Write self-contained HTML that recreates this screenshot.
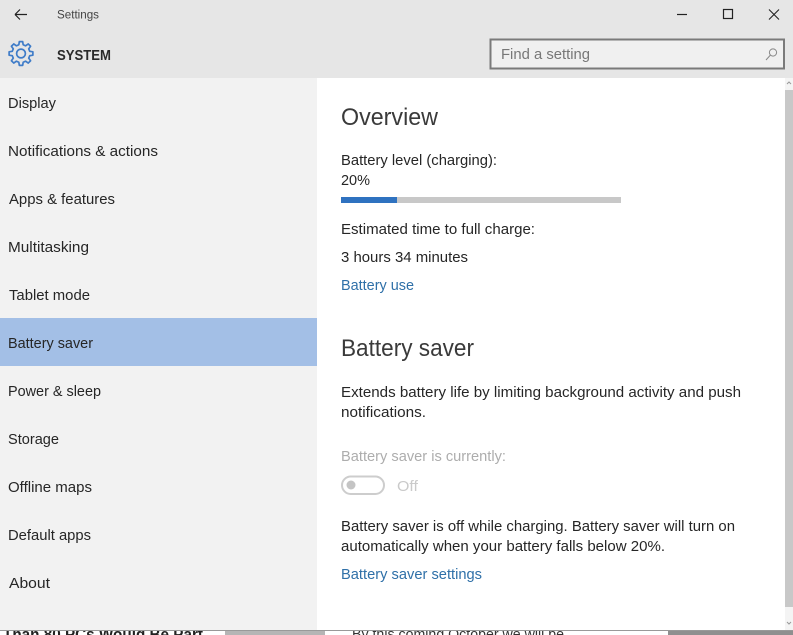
<!DOCTYPE html>
<html><head><meta charset="utf-8"><style>
html,body{margin:0;padding:0;background:#fff}
svg{display:block}
text{font-family:"Liberation Sans",sans-serif;font-size:14.5px;fill:#262626}
.l{fill:#2f70a8}.d{fill:#adadad}
</style></head><body>
<svg width="793" height="635" viewBox="0 0 793 635" xmlns="http://www.w3.org/2000/svg">
<rect width="793" height="635" fill="#fff"/>
<!-- window below -->
<rect y="630" width="793" height="5" fill="#fff"/>
<rect x="225" y="630" width="100" height="5" fill="#b5b5b5"/>
<rect x="668" y="630" width="125" height="5" fill="#8f8f8f"/>
<text x="3" y="640" style="font-size:17px;font-weight:bold;fill:#222" textLength="200" lengthAdjust="spacingAndGlyphs">Than 80 PCs Would Be Part</text>
<text x="352" y="639" style="fill:#333" textLength="212" lengthAdjust="spacingAndGlyphs">By this coming October we will be</text>
<!-- settings window -->
<rect width="793" height="630" fill="#fff"/>
<rect y="630" width="793" height="1" fill="#999"/>
<rect width="793" height="78" fill="#e6e6e6"/>
<rect y="78" width="317" height="552" fill="#f2f2f2"/>
<rect y="318" width="317" height="48" fill="#a3bfe6"/>
<!-- title bar -->
<path d="M15 14.5H27M15 14.5L20 9.5M15 14.5L20 19.5" fill="none" stroke="#222" stroke-width="1.2"/>
<text x="57" y="18.5" style="font-size:11.5px;fill:#444" textLength="42" lengthAdjust="spacingAndGlyphs">Settings</text>
<path d="M677 14.5H687" stroke="#222" stroke-width="1.2"/>
<rect x="723.5" y="9.5" width="9" height="9" fill="none" stroke="#222" stroke-width="1.2"/>
<path d="M769 9.5L779 19.5M779 9.5L769 19.5" stroke="#222" stroke-width="1.1"/>
<!-- gear -->
<g transform="translate(21 53.5)" fill="none" stroke="#3f7cc8" stroke-width="1.7" stroke-linejoin="round">
<circle r="4.4"/>
<path d="M8.73-2.18L11.88-1.67L11.88 1.67L8.73 2.18L7.71 4.64L9.58 7.22L7.22 9.58L4.64 7.71L2.18 8.73L1.67 11.88L-1.67 11.88L-2.18 8.73L-4.64 7.71L-7.22 9.58L-9.58 7.22L-7.71 4.64L-8.73 2.18L-11.88 1.67L-11.88-1.67L-8.73-2.18L-7.71-4.64L-9.58-7.22L-7.22-9.58L-4.64-7.71L-2.18-8.73L-1.67-11.88L1.67-11.88L2.18-8.73L4.64-7.71L7.22-9.58L9.58-7.22L7.71-4.64Z"/>
</g>
<text x="57" y="60" style="font-size:15px;font-weight:bold;fill:#2a2a2a" textLength="54" lengthAdjust="spacingAndGlyphs">SYSTEM</text>
<!-- search -->
<rect x="490.5" y="39.5" width="293.5" height="29" fill="#f0f0f0" stroke="#7a7a7a" stroke-width="2"/>
<text x="501" y="59" style="fill:#777" textLength="89" lengthAdjust="spacingAndGlyphs">Find a setting</text>
<circle cx="773" cy="52.5" r="3.6" fill="none" stroke="#888"/>
<path d="M770.5 55L766 60" stroke="#888"/>
<!-- nav -->
<text x="8" y="108" textLength="48" lengthAdjust="spacingAndGlyphs">Display</text>
<text x="8" y="156" textLength="150" lengthAdjust="spacingAndGlyphs">Notifications &amp; actions</text>
<text x="9" y="204" textLength="106" lengthAdjust="spacingAndGlyphs">Apps &amp; features</text>
<text x="8" y="252" textLength="81" lengthAdjust="spacingAndGlyphs">Multitasking</text>
<text x="9" y="300" textLength="81" lengthAdjust="spacingAndGlyphs">Tablet mode</text>
<text x="8" y="348" textLength="85" lengthAdjust="spacingAndGlyphs">Battery saver</text>
<text x="8" y="396" textLength="93" lengthAdjust="spacingAndGlyphs">Power &amp; sleep</text>
<text x="8" y="444" textLength="51" lengthAdjust="spacingAndGlyphs">Storage</text>
<text x="8" y="492" textLength="84" lengthAdjust="spacingAndGlyphs">Offline maps</text>
<text x="8" y="540" textLength="83" lengthAdjust="spacingAndGlyphs">Default apps</text>
<text x="9" y="588" textLength="41" lengthAdjust="spacingAndGlyphs">About</text>
<!-- content -->
<text x="341" y="125" style="font-size:24px;fill:#3a3a3a" textLength="97" lengthAdjust="spacingAndGlyphs">Overview</text>
<text x="341" y="165" textLength="156" lengthAdjust="spacingAndGlyphs">Battery level (charging):</text>
<text x="341" y="185" textLength="29" lengthAdjust="spacingAndGlyphs">20%</text>
<rect x="341" y="197" width="280" height="6" fill="#c8c8c8"/>
<rect x="341" y="197" width="56" height="6" fill="#2f72c0"/>
<text x="341" y="234" textLength="194" lengthAdjust="spacingAndGlyphs">Estimated time to full charge:</text>
<text x="341" y="262" textLength="127" lengthAdjust="spacingAndGlyphs">3 hours 34 minutes</text>
<text x="341" y="290" class="l" textLength="73" lengthAdjust="spacingAndGlyphs">Battery use</text>
<text x="341" y="356" style="font-size:24px;fill:#3a3a3a" textLength="133" lengthAdjust="spacingAndGlyphs">Battery saver</text>
<text x="341" y="397" textLength="400" lengthAdjust="spacingAndGlyphs">Extends battery life by limiting background activity and push</text>
<text x="341" y="417" textLength="85" lengthAdjust="spacingAndGlyphs">notifications.</text>
<text x="341" y="461" class="d" textLength="165" lengthAdjust="spacingAndGlyphs">Battery saver is currently:</text>
<rect x="342" y="476.5" width="42" height="17.5" rx="8.75" fill="#fff" stroke="#cdcdcd" stroke-width="2"/>
<circle cx="351" cy="485" r="4.5" fill="#c4c4c4"/>
<text x="397" y="491" style="fill:#cacaca" textLength="21" lengthAdjust="spacingAndGlyphs">Off</text>
<text x="341" y="531" textLength="394" lengthAdjust="spacingAndGlyphs">Battery saver is off while charging. Battery saver will turn on</text>
<text x="341" y="551" textLength="324" lengthAdjust="spacingAndGlyphs">automatically when your battery falls below 20%.</text>
<text x="341" y="579" class="l" textLength="141" lengthAdjust="spacingAndGlyphs">Battery saver settings</text>
<!-- scrollbar -->
<rect x="785" y="78" width="8" height="552" fill="#f4f4f4"/>
<rect x="785" y="90" width="8" height="517" fill="#c8c8c8"/>
<path d="M787 84L789 82L791 84M787 622L789 624L791 622" fill="none" stroke="#999"/>
</svg>
</body></html>
